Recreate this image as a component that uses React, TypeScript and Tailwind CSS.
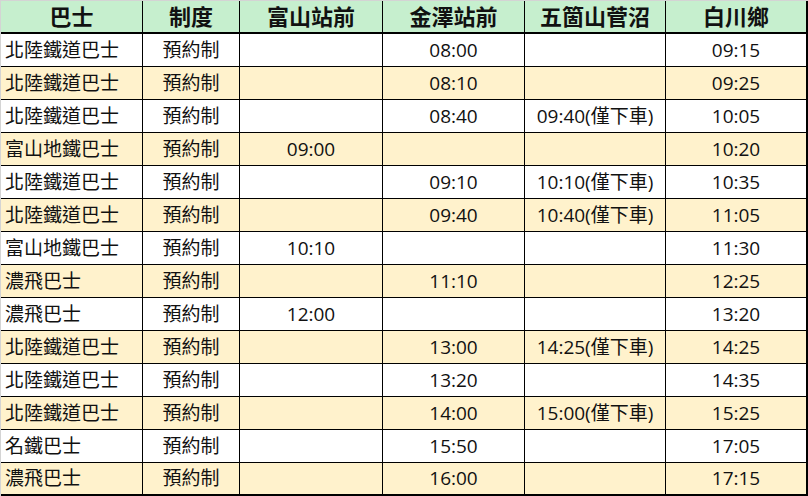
const headers = ['巴士', '制度', '富山站前', '金澤站前', '五箇山菅沼', '白川鄉'];

const rows: string[][] = [
  ['北陸鐵道巴士', '預約制', '', '08:00', '', '09:15'],
  ['北陸鐵道巴士', '預約制', '', '08:10', '', '09:25'],
  ['北陸鐵道巴士', '預約制', '', '08:40', '09:40(僅下車)', '10:05'],
  ['富山地鐵巴士', '預約制', '09:00', '', '', '10:20'],
  ['北陸鐵道巴士', '預約制', '', '09:10', '10:10(僅下車)', '10:35'],
  ['北陸鐵道巴士', '預約制', '', '09:40', '10:40(僅下車)', '11:05'],
  ['富山地鐵巴士', '預約制', '10:10', '', '', '11:30'],
  ['濃飛巴士', '預約制', '', '11:10', '', '12:25'],
  ['濃飛巴士', '預約制', '12:00', '', '', '13:20'],
  ['北陸鐵道巴士', '預約制', '', '13:00', '14:25(僅下車)', '14:25'],
  ['北陸鐵道巴士', '預約制', '', '13:20', '', '14:35'],
  ['北陸鐵道巴士', '預約制', '', '14:00', '15:00(僅下車)', '15:25'],
  ['名鐵巴士', '預約制', '', '15:50', '', '17:05'],
  ['濃飛巴士', '預約制', '', '16:00', '', '17:15'],
];

// cell widths include their right border
const widths = ['w-[142px]', 'w-[97px]', 'w-[143px]', 'w-[142px]', 'w-[141px]', 'w-[142px]'];

function Cell({ i, children, head }: { i: number; children: React.ReactNode; head?: boolean }) {
  const last = i === widths.length - 1;
  return (
    <div
      className={`${widths[i]} h-full flex items-center ${i === 0 && !head ? 'justify-start pl-1' : 'justify-center'} border-black ${last ? 'border-r-2' : 'border-r'}`}
    >
      {children}
    </div>
  );
}

export default function App() {
  return (
    <div
      className="w-[808px] h-[496px] bg-white border-t border-l border-[#d4d4d4] text-[#111] overflow-hidden"
      style={{ fontFamily: '"Open Sans", "Noto Sans CJK TC", sans-serif' }}
    >
      <div className="flex h-[33px] bg-[#c6efce] border-b-2 border-black text-[22px] font-bold">
        {headers.map((h, i) => (
          <Cell key={h} i={i} head>
            {h}
          </Cell>
        ))}
      </div>
      {rows.map((r, ri) => (
        <div
          key={ri}
          className={`flex h-[33px] text-[19px] border-black ${ri === rows.length - 1 ? 'border-b-2' : 'border-b'} ${ri % 2 === 1 ? 'bg-[#fff2cc]' : 'bg-white'}`}
        >
          {r.map((c, i) => (
            <Cell key={i} i={i}>
              {c}
            </Cell>
          ))}
        </div>
      ))}
    </div>
  );
}
